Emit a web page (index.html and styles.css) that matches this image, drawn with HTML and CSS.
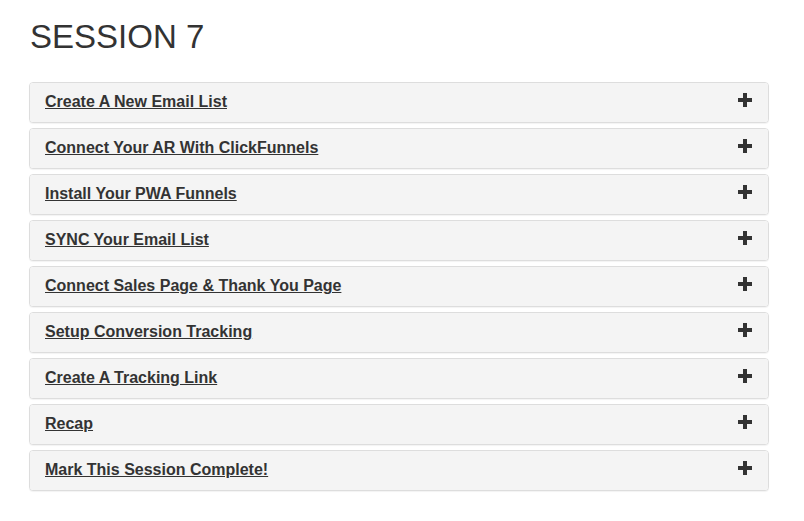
FILE: index.html
```html
<!DOCTYPE html>
<html lang="en">
<head>
    <meta charset="UTF-8">
    <meta name="viewport" content="width=device-width, initial-scale=1.0">
    <title>Session 7</title>
    <link rel="stylesheet" href="styles.css">
</head>
<body>
    <div class="container">
        <h1>SESSION 7</h1>
        <div class="panel-group">
            <div class="panel"><div class="panel-heading"><a href="#">Create A New Email List</a><span class="plus"><svg width="14" height="14" viewBox="0 0 14 14"><path d="M5 0h4v5h5v4h-5v5h-4v-5h-5v-4h5z"/></svg></span></div></div>
            <div class="panel"><div class="panel-heading"><a href="#">Connect Your AR With ClickFunnels</a><span class="plus"><svg width="14" height="14" viewBox="0 0 14 14"><path d="M5 0h4v5h5v4h-5v5h-4v-5h-5v-4h5z"/></svg></span></div></div>
            <div class="panel"><div class="panel-heading"><a href="#">Install Your PWA Funnels</a><span class="plus"><svg width="14" height="14" viewBox="0 0 14 14"><path d="M5 0h4v5h5v4h-5v5h-4v-5h-5v-4h5z"/></svg></span></div></div>
            <div class="panel"><div class="panel-heading"><a href="#">SYNC Your Email List</a><span class="plus"><svg width="14" height="14" viewBox="0 0 14 14"><path d="M5 0h4v5h5v4h-5v5h-4v-5h-5v-4h5z"/></svg></span></div></div>
            <div class="panel"><div class="panel-heading"><a href="#">Connect Sales Page &amp; Thank You Page</a><span class="plus"><svg width="14" height="14" viewBox="0 0 14 14"><path d="M5 0h4v5h5v4h-5v5h-4v-5h-5v-4h5z"/></svg></span></div></div>
            <div class="panel"><div class="panel-heading"><a href="#">Setup Conversion Tracking</a><span class="plus"><svg width="14" height="14" viewBox="0 0 14 14"><path d="M5 0h4v5h5v4h-5v5h-4v-5h-5v-4h5z"/></svg></span></div></div>
            <div class="panel"><div class="panel-heading"><a href="#">Create A Tracking Link</a><span class="plus"><svg width="14" height="14" viewBox="0 0 14 14"><path d="M5 0h4v5h5v4h-5v5h-4v-5h-5v-4h5z"/></svg></span></div></div>
            <div class="panel"><div class="panel-heading"><a href="#">Recap</a><span class="plus"><svg width="14" height="14" viewBox="0 0 14 14"><path d="M5 0h4v5h5v4h-5v5h-4v-5h-5v-4h5z"/></svg></span></div></div>
            <div class="panel"><div class="panel-heading"><a href="#">Mark This Session Complete!</a><span class="plus"><svg width="14" height="14" viewBox="0 0 14 14"><path d="M5 0h4v5h5v4h-5v5h-4v-5h-5v-4h5z"/></svg></span></div></div>
        </div>
    </div>
</body>
</html>
```

FILE: styles.css
```css
body {
    font-family: "Liberation Sans", Arial, sans-serif;
    color: #333;
    background-color: #fff;
    margin: 0;
}
.container {
    padding: 0 35px 0 29px;
}
h1 {
    font-size: 33px;
    font-weight: 400;
    line-height: 1.1;
    margin: 19px 0 27px 1px;
}
.panel-group .panel {
    background-color: #fff;
    border: 1px solid #ddd;
    border-radius: 4px;
    box-shadow: 0 1px 1px rgba(0,0,0,0.05);
    margin-bottom: 5px;
}
.panel-heading {
    display: flex;
    justify-content: space-between;
    align-items: center;
    background-color: #f4f4f4;
    padding: 10px 15px;
    border-bottom: 1px solid transparent;
    border-radius: 3px;
    font-size: 16px;
    line-height: 18px;
    font-weight: bold;
}
.panel-heading a {
    color: #333;
    text-decoration: underline;
}
.plus {
    display: flex;
    align-self: flex-start;
    margin-right: 1px;
}
.plus svg {
    fill: #333;
}
```
